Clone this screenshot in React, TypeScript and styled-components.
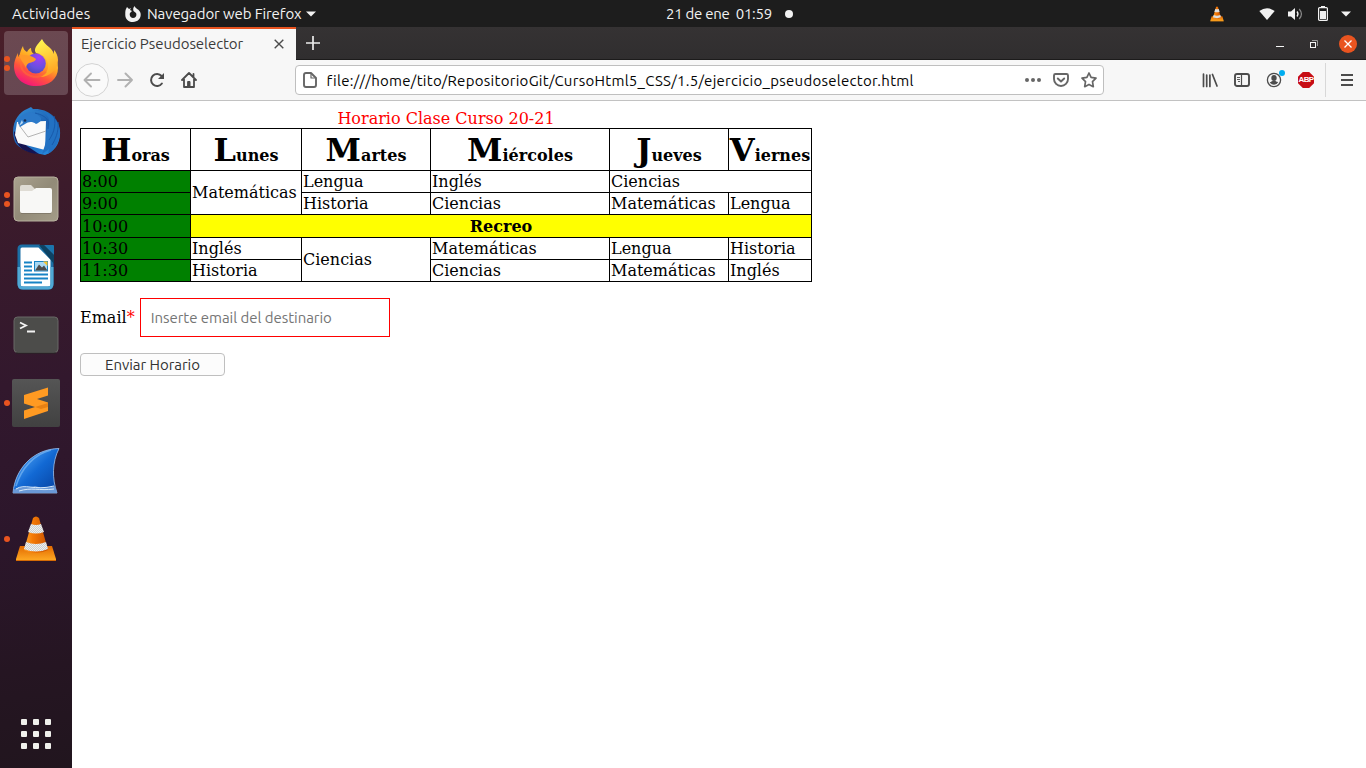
import React from "react";
import styled, { createGlobalStyle } from "styled-components";

const GlobalStyle = createGlobalStyle`
  *, *::before, *::after { box-sizing: border-box; }
  html, body, #root { margin: 0; height: 100%; }
  body { overflow: hidden; background: #fff; }
  svg { display: block; flex: none; }
`;

const uiFont = `Ubuntu, "Noto Sans", sans-serif`;

const Desktop = styled.div`
  width: 1366px;
  height: 768px;
  display: grid;
  grid-template: 27px 741px / 72px 1fr;
  font-family: ${uiFont};
  font-size: 15px;
`;

const TopBar = styled.header`
  grid-column: 1 / -1;
  display: grid;
  grid-template-columns: 666px 1fr auto;
  align-items: center;
  background: #1d1d1d;
  color: #f2f2f2;
`;

const TopGroup = styled.div`
  display: flex;
  align-items: center;
`;

const Label = styled.span<{ $w: number; $ls?: number }>`
  flex: none;
  width: ${(p) => p.$w}px;
  letter-spacing: ${(p) => p.$ls ?? 0}px;
  white-space: pre;
  line-height: 20px;
`;

const Spacer = styled.span<{ $w: number }>`
  flex: none;
  width: ${(p) => p.$w}px;
`;

const ClockDot = styled.span`
  width: 8px;
  height: 8px;
  margin-left: 13px;
  border-radius: 50%;
  background: #f2f2f2;
`;

const Dock = styled.nav`
  display: flex;
  flex-direction: column;
  gap: 4px;
  padding: 4px;
  background: linear-gradient(172deg, #4a1f29 0%, #3c1b2b 22%, #32182d 48%, #2c162b 68%, #251522 86%, #21151e 100%);
`;

const DockItem = styled.div<{ $active?: boolean; $last?: boolean }>`
  position: relative;
  flex: none;
  height: 64px;
  display: grid;
  place-items: center;
  border-radius: 4px;
  margin-top: ${(p) => (p.$last ? "auto" : 0)};
  margin-bottom: ${(p) => (p.$last ? "-2px" : 0)};
  background: ${(p) => (p.$active ? "rgba(255,255,255,.19)" : "transparent")};
`;

const Running = styled.div`
  position: absolute;
  left: 0;
  top: 0;
  bottom: 0;
  display: flex;
  flex-direction: column;
  justify-content: center;
  gap: 3px;
`;

const RunningDot = styled.i`
  width: 6px;
  height: 6px;
  border-radius: 50%;
  background: #e95420;
`;

const Browser = styled.main`
  display: flex;
  flex-direction: column;
  background: #fff;
`;

const TabStrip = styled.div`
  flex: none;
  height: 33px;
  display: flex;
  align-items: stretch;
  background: linear-gradient(#353233, #302e2f);
  border-bottom: 1px solid #1c1b1b;
`;

const Tab = styled.div`
  width: 224px;
  height: 33px;
  display: flex;
  align-items: center;
  padding: 0 0 1px 9px;
  border-top: 2px solid #e95420;
  background: #f7f7f7;
  color: #3b3b3b;
`;

const StripIcons = styled.div`
  flex: 1;
  display: flex;
  align-items: center;
  justify-content: space-between;
  padding: 0 9px 0 10px;
`;

const Controls = styled.div`
  display: flex;
  align-items: center;
  padding-top: 2px;
`;

const Toolbar = styled.div`
  flex: none;
  height: 41px;
  display: flex;
  align-items: center;
  background: #f7f7f7;
  border-bottom: 1px solid #c2c2c2;
  padding-left: 3px;
`;

const AddressBar = styled.div`
  width: 809px;
  height: 30px;
  margin-left: 98px;
  display: flex;
  align-items: center;
  padding: 0 6px;
  border: 1px solid #bfbfbf;
  border-radius: 4px;
  background: #fff;
  color: #050505;
`;

const AddressText = styled(Label)`
  padding-top: 2px;
`;

const AddressActions = styled.div`
  display: flex;
  align-items: center;
  gap: 12px;
  margin-left: auto;
`;

const ToolbarActions = styled.div`
  display: flex;
  align-items: center;
  margin-left: auto;
`;

const Divider = styled.span`
  width: 1px;
  height: 34px;
  background: #d8d8d8;
`;

const Page = styled.article`
  flex: 1;
  padding: 8px;
  font: 16px/19px "DejaVu Serif", serif;
  color: #000;
`;

const Caption = styled.div`
  width: 732px;
  height: 19px;
  color: #f00;
  text-align: center;
`;

const Schedule = styled.div`
  width: 732px;
  display: grid;
  grid-template-columns: 110px 111px 129px 179px 119px 83px;
  grid-template-rows: 42px 22px 22px 23px 22px 22px;
  border: solid #000;
  border-width: 0 1px 1px 0;
`;

const Cell = styled.div<{ $col?: number; $row?: number; $kind?: "hour" | "break" }>`
  grid-column: span ${(p) => p.$col ?? 1};
  grid-row: span ${(p) => p.$row ?? 1};
  display: flex;
  align-items: center;
  justify-content: ${(p) => (p.$kind === "break" ? "center" : "flex-start")};
  padding-left: ${(p) => (p.$kind === "break" ? 0 : 1)}px;
  border: solid #000;
  border-width: 1px 0 0 1px;
  background: ${(p) => (p.$kind === "hour" ? "#008000" : p.$kind === "break" ? "#ff0" : "#fff")};
  font-weight: ${(p) => (p.$kind === "break" ? 700 : 400)};
`;

const Heading = styled.div`
  padding-top: 1px;
  border: solid #000;
  border-width: 1px 0 0 1px;
  font-weight: 700;
  line-height: 40px;
  text-align: center;
  white-space: nowrap;
  &::first-letter { font-size: 32px; }
`;

const Field = styled.label`
  display: flex;
  align-items: center;
  height: 39px;
  margin-top: 16px;
`;

const Required = styled.span`
  color: #f00;
`;

const EmailInput = styled.input`
  width: 250px;
  height: 39px;
  margin: 0 0 0 5px;
  padding: 0 10px;
  border: 1px solid #f00;
  border-radius: 0;
  outline: 0;
  font: 15px ${uiFont};
  letter-spacing: -0.04px;
  &::placeholder { color: #757575; opacity: 1; }
`;

const SendButton = styled.button`
  display: block;
  width: 145px;
  height: 23px;
  margin-top: 16px;
  padding: 0;
  border: 1px solid #bfbfbf;
  border-radius: 4px;
  background: #fcfcfc;
  color: #333;
  font: 15px/20px ${uiFont};
  letter-spacing: -0.05px;
`;

const FirefoxIcon = () => (
  <svg width="48" height="48" viewBox="0 0 48 48">
    <defs>
      <linearGradient id="fxBody" x1=".8" y1=".1" x2=".3" y2="1">
        <stop offset="0" stopColor="#ffe340" />
        <stop offset=".38" stopColor="#ffa522" />
        <stop offset=".65" stopColor="#ff553c" />
        <stop offset="1" stopColor="#f3127e" />
      </linearGradient>
      <radialGradient id="fxGlobe" cx=".65" cy=".2" r=".9">
        <stop offset="0" stopColor="#a33ef5" />
        <stop offset=".6" stopColor="#6750df" />
        <stop offset="1" stopColor="#4b45b6" />
      </radialGradient>
      <linearGradient id="fxFlame" x1=".4" y1="0" x2=".7" y2="1">
        <stop offset="0" stopColor="#fff44f" />
        <stop offset="1" stopColor="#ff9d20" />
      </linearGradient>
    </defs>
    <path d="M11 7c0 3 2 5 4 6 1-2 3-4 4-4 0 3 1 5 3 6 5-1 9-1 13 2l5-2c4 4 6 9 6 14 0 11-9 18-22 18C11 47 2 39 2 27c0-5 2-9 4-13 0 2 0 3 1 4 1-4 2-8 4-11Z" fill="url(#fxBody)" />
    <path d="M30 0c-5 6-9 10-6 14 9 1 13 8 12 15-1 5-5 8-8 9 9 0 18-7 18-17 0-4-2-8-4-10v4c-2-7-9-8-12-15Z" fill="url(#fxFlame)" />
    <circle cx="23.800" cy="24.500" r="10" fill="url(#fxGlobe)" />
    <path d="M7 16c5 0 10 0 14 2l3 2c-1 3-4 3-7 4-2 1-3 3-3 5-2-5-5-7-7-13Z" fill="#ff9a29" />
    <path d="M9 23c-1 6 3 12 10 14 6 2 12 0 15-4" fill="none" stroke="#ff6d35" strokeWidth="2" opacity=".6" />
  </svg>
);

const ThunderbirdIcon = () => (
  <svg width="50" height="50" viewBox="0 0 50 50">
    <defs>
      <linearGradient id="tbBlue" x1=".2" y1="0" x2=".8" y2="1">
        <stop offset="0" stopColor="#3088d3" />
        <stop offset=".5" stopColor="#1c60b2" />
        <stop offset="1" stopColor="#268ce0" />
      </linearGradient>
    </defs>
    <path d="M4 36C-2 20 7 6 16 3l4-2 2 2c14-1 26 8 27 22 1 12-6 21-15 24l-5-1C17 46 8 43 4 36Z" fill="url(#tbBlue)" />
    <path d="M3 25c0 9 5 17 12 20 4 2 9 3 13 3l-12-8Z" fill="#151451" />
    <path d="m6 16 29-1-1 29-27-7-3-8Z" fill="#fafafa" />
    <path d="m8 19 9 12 18-6" fill="none" stroke="#aaa" strokeWidth=".9" />
    <path d="M7 17C10 5 22 4 28 10c4 3 2 6-3 8-4-3-8-2-11 0l-5 3Z" fill="#2b79c9" />
    <path d="M20 4c16 0 22 9 16 20-1 5 0 10-2 15l-3 9 7-5-1 5c8-5 12-14 12-23C47 10 33 2 20 4Z" fill="#2271c3" />
    <path d="M24 7c13 3 15 9 13 16m6-13c3 10-2 20-5 24m9-18c1 10-3 18-6 23" fill="none" stroke="#185aab" strokeWidth="1" />
    <path d="m11 14-3 6 4-3Z" fill="#b9d7ef" />
    <circle cx="14" cy="14.5" r="1.3" fill="#152d54" />
  </svg>
);

const FilesIcon = () => (
  <svg width="46" height="46" viewBox="0 0 46 46">
    <defs>
      <linearGradient id="filesBg" x1="0" y1="0" x2="1" y2="1">
        <stop offset="0" stopColor="#aaa28f" />
        <stop offset=".5" stopColor="#928b78" />
        <stop offset="1" stopColor="#a49c88" />
      </linearGradient>
    </defs>
    <rect x="1" y="1" width="44" height="44" rx="4" fill="url(#filesBg)" stroke="#b7b09e" />
    <path d="M7 11q0-2 2-2h9l4 4v7H7Z" fill="#dfdcd4" />
    <path d="M7 15h12l4-3h14q2 0 2 2v21q0 2-2 2H9q-2 0-2-2Z" fill="#f8f8f6" />
    <path d="M8 37.5h30" stroke="#7c7566" strokeWidth=".8" />
  </svg>
);

const WriterIcon = () => (
  <svg width="38" height="46" viewBox="0 0 38 46">
    <path d="M5 2h17l13 13v25q0 4-4 4H6q-4 0-4-4V5q0-3 3-3Z" fill="#fff" stroke="#1b6fa5" strokeWidth="3" />
    <path d="M2 23v17q0 4 4 4h25q4 0 4-4V23" fill="none" stroke="#50a8d4" strokeWidth="3" />
    <path d="M22 1h5l10 10v9Z" fill="#0d4263" />
    <path d="M27 1h9q1 0 1 1v9Z" fill="#1b75ad" />
    <path d="M7 18.5h8M7 22.5h8M7 26.5h8M7 30.5h24M7 34.5h24M7 38.5h18" stroke="#1783c5" strokeWidth="2" />
    <rect x="17.5" y="17.5" width="13" height="9.5" fill="#a9d8f2" stroke="#1783c5" />
    <path d="m18 26.5 4-6 3 3 2-2 3.5 5Z" fill="#4c4c4c" />
    <path d="M26 17.5h4.5V22Z" fill="#f9c62d" />
  </svg>
);

const TerminalIcon = () => (
  <svg width="46" height="38" viewBox="0 0 46 38">
    <rect x="1" y="1" width="44" height="35.5" rx="3.5" fill="#4c4c4a" stroke="#696966" />
    <path d="M3 37h40" stroke="#252523" />
    <path d="m7 6.5 6 3-6 3M14 15.5h8" fill="none" stroke="#f3f3f3" strokeWidth="1.8" />
  </svg>
);

const SublimeIcon = () => (
  <svg width="48" height="48" viewBox="0 0 48 48">
    <defs>
      <linearGradient id="sublimeBg" x2="0" y2="1">
        <stop stopColor="#555" />
        <stop offset="1" stopColor="#414141" />
      </linearGradient>
    </defs>
    <rect width="48" height="48" rx="2" fill="url(#sublimeBg)" />
    <path d="M36 8.500v8L25 20l11 3.500v8.500l-24 8v-8.500L23 28l-11-3.500V16Z" fill="#ff9a22" />
    <path d="m23 28 13-4v4l-7 2Z" fill="#e88113" />
  </svg>
);

const SharkFinIcon = () => (
  <svg width="48" height="48" viewBox="0 0 48 48">
    <defs>
      <linearGradient id="fin" x1="0" y1="0" x2="1" y2="1">
        <stop offset=".15" stopColor="#4ca0f2" />
        <stop offset=".5" stopColor="#1269d4" />
        <stop offset="1" stopColor="#063f9c" />
      </linearGradient>
    </defs>
    <path d="M1 46C3 22 21 2 47 1.500c-7 14-7 30-2 44.500Z" fill="url(#fin)" stroke="#9fc3ed" strokeWidth=".8" />
    <path d="M4 39C9 22 22 7 39 3" fill="none" stroke="#80bbf5" strokeWidth="1.5" opacity=".65" />
    <path d="M1 46v-3c8-5 15-1 22-4 7 2 13 2 20 0l2 7Z" fill="#6a99d7" />
    <path d="M4 42c9-6 18 2 38-3M7 44c13-4 20 0 35-2" fill="none" stroke="#d7e9fa" strokeWidth="1" />
  </svg>
);

const ConeIcon = ({ size }: { size: number }) => (
  <svg width={size} height={size} viewBox="0 0 48 48">
    <defs>
      <linearGradient id="coneOrange">
        <stop stopColor="#ffa733" />
        <stop offset=".35" stopColor="#f57b06" />
        <stop offset="1" stopColor="#c95100" />
      </linearGradient>
      <linearGradient id="coneBase" x2="0" y2="1">
        <stop stopColor="#e26900" />
        <stop offset="1" stopColor="#ffac25" />
      </linearGradient>
      <pattern id="coneWhite" width="2" height="2" patternUnits="userSpaceOnUse">
        <path d="M0 0h2v2H0Z" fill="#f0f0ee" />
        <path d="M0 0h1v1H0ZM1 1h1v1H1Z" fill="#cbcfd0" />
      </pattern>
    </defs>
    <path d="M8 31h32l4 13v2H4v-2Z" fill="url(#coneBase)" />
    <path d="M4 45.5h40" stroke="#d56b05" />
    <path d="M21 3q3-3 6 0l9 32q-12 6-24 0Z" fill="url(#coneOrange)" />
    <path d="m19 9-3 8q8 3 16 0l-3-8q-5 2-10 0ZM14 27l-2 7q12 5 24 0l-2-7q-10 4-20 0Z" fill="url(#coneWhite)" />
  </svg>
);

const AppsIcon = () => (
  <svg width="30" height="30" viewBox="0 0 30 30" fill="#f0f0ec">
    {[0, 12, 24].map((y) => [0, 12, 24].map((x) => <rect key={`${x}-${y}`} x={x} y={y} width="6" height="6" rx="1" />))}
  </svg>
);

const FirefoxGlyph = () => (
  <svg width="16" height="16" viewBox="0 0 16 16">
    <path d="M1 3 2 1l2 2 2-1-1 2 2 1-2 2c-1 3 1 5 3 5 3 0 4-3 3-5L8.5 5C8 3 8 2 9.500 0c1 3 5 3 6 7 1 5-2 9-7.500 9S0 12 .3 8C.2 6 .5 4 1 3Z" fill="#f2f2f2" />
  </svg>
);

const CaretIcon = () => (
  <svg width="10" height="6" viewBox="0 0 10 6"><path d="M0 .5h10L5 5.500Z" fill="#f2f2f2" /></svg>
);

const WifiIcon = () => (
  <svg width="16" height="12" viewBox="0 0 16 12"><path d="M.3 3Q8-2.500 15.700 3L8 12Z" fill="#f2f2f2" /></svg>
);

const VolumeIcon = () => (
  <svg width="15" height="14" viewBox="0 0 15 14">
    <path d="M0 4.500h3L7 1v12L3 9.500H0Z" fill="#f2f2f2" />
    <path d="M9 4.500q2 2.500 0 5" fill="none" stroke="#f2f2f2" strokeWidth="1.300" />
    <path d="M11.200 2q4.500 5 0 10" fill="none" stroke="#888" strokeWidth="1.200" />
  </svg>
);

const BatteryIcon = () => (
  <svg width="10" height="15" viewBox="0 0 10 15">
    <path d="M3 0h4v2H3Z" fill="#f2f2f2" />
    <rect x=".6" y="1.600" width="8.800" height="12.800" rx="1" fill="none" stroke="#f2f2f2" strokeWidth="1.200" />
    <path d="M2 5h6v8H2Z" fill="#f2f2f2" />
  </svg>
);

const CloseTabIcon = () => (
  <svg width="10" height="10" viewBox="0 0 10 10"><path d="m.7.7 8.600 8.600M9.300.7.7 9.300" stroke="#4c4c4c" strokeWidth="1.400" /></svg>
);

const PlusIcon = () => (
  <svg width="14" height="14" viewBox="0 0 14 14"><path d="M7 0v14M0 7h14" stroke="#ececec" strokeWidth="1.700" /></svg>
);

const MinimizeIcon = () => (
  <svg width="8" height="10" viewBox="0 0 8 10"><path d="M0 7.500h8" stroke="#f4f4f4" /></svg>
);

const RestoreIcon = () => (
  <svg width="8" height="8" viewBox="0 0 8 8" fill="none">
    <path d="M2 .5h5.500V6" stroke="#999" />
    <rect x=".5" y="2.500" width="5" height="5" stroke="#f4f4f4" />
  </svg>
);

const CloseWindowIcon = () => (
  <svg width="18" height="18" viewBox="0 0 18 18">
    <circle cx="9" cy="9" r="9" fill="#e95420" />
    <path d="m5.500 5.500 7 7M12.500 5.500l-7 7" stroke="#fff" strokeWidth="1.300" />
  </svg>
);

const BackIcon = () => (
  <svg width="34" height="34" viewBox="0 0 34 34" fill="none">
    <circle cx="17" cy="17" r="16.400" fill="#fafafa" stroke="#d2d2d2" />
    <path d="M24.500 17H10M16 10.500 9.500 17l6.500 6.500" stroke="#b1b1b1" strokeWidth="1.900" strokeLinecap="round" strokeLinejoin="round" />
  </svg>
);

const ForwardIcon = () => (
  <svg width="16" height="16" viewBox="0 0 16 16" fill="none">
    <path d="M1 8h14M8.500 1.500 15 8l-6.500 6.500" stroke="#b1b1b1" strokeWidth="1.900" strokeLinecap="round" strokeLinejoin="round" />
  </svg>
);

const ReloadIcon = () => (
  <svg width="16" height="16" viewBox="0 0 16 16" fill="none">
    <path d="M12.900 11.500A6 6 0 1 1 12.600 4" stroke="#4c4c4c" strokeWidth="2" strokeLinecap="round" />
    <path d="M15 1v6H9Z" fill="#4c4c4c" />
  </svg>
);

const HomeIcon = () => (
  <svg width="16" height="16" viewBox="0 0 16 16" fill="none" stroke="#4c4c4c" strokeLinejoin="round" strokeLinecap="round">
    <path d="m1 8 7-7 7 7M3 7v8h10V7M12.500 2v3" strokeWidth="1.800" />
    <path d="M7 9.500h2V14H7Z" fill="#4c4c4c" strokeWidth="1" />
  </svg>
);

const DocumentIcon = () => (
  <svg width="16" height="16" viewBox="0 0 16 16" fill="none" stroke="#666" strokeLinejoin="round">
    <path d="M4 1h5l5 5v7q0 2-2 2H4q-2 0-2-2V3q0-2 2-2Z" strokeWidth="1.900" />
    <path d="M9 1v5h5" strokeWidth="1.200" />
  </svg>
);

const DotsIcon = () => (
  <svg width="16" height="16" viewBox="0 0 16 16" fill="#666"><circle cx="2" cy="8" r="2" /><circle cx="8" cy="8" r="2" /><circle cx="14" cy="8" r="2" /></svg>
);

const PocketIcon = () => (
  <svg width="16" height="16" viewBox="0 0 16 16" fill="none" stroke="#666" strokeWidth="1.900" strokeLinejoin="round" strokeLinecap="round">
    <path d="M2.500 2h11Q15 2 15 3.500V7A7 7 0 0 1 1 7V3.500Q1 2 2.500 2Z" />
    <path d="m4.800 6.500 3.200 3 3.200-3" />
  </svg>
);

const StarIcon = () => (
  <svg width="16" height="16" viewBox="0 0 16 16" fill="none" stroke="#666" strokeWidth="1.700" strokeLinejoin="round">
    <path d="m8 1 2.100 4.400 4.900.7-3.500 3.500.8 5.100L8 12.400l-4.300 2.300.8-5.100L1 6.100l4.900-.7Z" />
  </svg>
);

const LibraryIcon = () => (
  <svg width="16" height="16" viewBox="0 0 16 16" fill="none" stroke="#4c4c4c" strokeWidth="1.700" strokeLinecap="round">
    <path d="M1.500 2v12.500M4.700 3v11.500M7.900 3v11.500M10.500 2.500l4.500 11.500" />
  </svg>
);

const SidebarIcon = () => (
  <svg width="16" height="16" viewBox="0 0 16 16" fill="none" stroke="#4c4c4c">
    <rect x="1" y="2" width="14" height="12" rx="2" strokeWidth="1.900" />
    <path d="M7.500 2v12" strokeWidth="1.200" />
    <path d="M3 5.500h3M3 7.500h3M4 9.500h2" strokeWidth=".9" />
  </svg>
);

const AccountIcon = () => (
  <svg width="19" height="20" viewBox="0 0 19 20">
    <circle cx="8" cy="10" r="6.600" fill="none" stroke="#4c4c4c" strokeWidth="1.300" />
    <ellipse cx="8" cy="8" rx="2.700" ry="3" fill="#4c4c4c" />
    <path d="M3.700 12q2-.2 2.800-1h3q1 .8 2.800 1-1.500 2.800-4.300 2.800T3.700 12Z" fill="#4c4c4c" />
    <circle cx="16" cy="3" r="3" fill="#00adf0" />
  </svg>
);

const BlockerBadge = styled.span`
  width: 16px;
  height: 16px;
  clip-path: polygon(30% 0, 70% 0, 100% 30%, 100% 70%, 70% 100%, 30% 100%, 0 70%, 0 30%);
  background: #c70d15;
  color: #fff;
  font: 700 8px/16px "Liberation Sans Narrow", "Liberation Sans", sans-serif;
  letter-spacing: -0.7px;
  display: flex;
  justify-content: center;
`;

const MenuIcon = () => (
  <svg width="12" height="14" viewBox="0 0 12 14"><path d="M0 2h12M0 7h12M0 12h12" stroke="#4c4c4c" strokeWidth="1.800" /></svg>
);

const dockApps: { icon: React.ReactNode; dots: number; active?: boolean }[] = [
  { icon: <FirefoxIcon />, dots: 2, active: true },
  { icon: <ThunderbirdIcon />, dots: 0 },
  { icon: <FilesIcon />, dots: 2 },
  { icon: <WriterIcon />, dots: 0 },
  { icon: <TerminalIcon />, dots: 0 },
  { icon: <SublimeIcon />, dots: 1 },
  { icon: <SharkFinIcon />, dots: 0 },
  { icon: <ConeIcon size={48} />, dots: 1 },
];

const days = ["Horas", "Lunes", "Martes", "Miércoles", "Jueves", "Viernes"];

type CellData = { text: string; col?: number; row?: number; kind?: "hour" | "break" };

const cells: CellData[] = [
  { text: "8:00", kind: "hour" },
  { text: "Matemáticas", row: 2 },
  { text: "Lengua" },
  { text: "Inglés" },
  { text: "Ciencias", col: 2 },
  { text: "9:00", kind: "hour" },
  { text: "Historia" },
  { text: "Ciencias" },
  { text: "Matemáticas" },
  { text: "Lengua" },
  { text: "10:00", kind: "hour" },
  { text: "Recreo", col: 5, kind: "break" },
  { text: "10:30", kind: "hour" },
  { text: "Inglés" },
  { text: "Ciencias", row: 2 },
  { text: "Matemáticas" },
  { text: "Lengua" },
  { text: "Historia" },
  { text: "11:30", kind: "hour" },
  { text: "Historia" },
  { text: "Ciencias" },
  { text: "Matemáticas" },
  { text: "Inglés" },
];

export default function App() {
  return (
    <Desktop>
      <GlobalStyle />
      <TopBar>
        <TopGroup>
          <Spacer $w={12} />
          <Label $w={113} $ls={0.1}>Actividades</Label>
          <FirefoxGlyph />
          <Spacer $w={6} />
          <Label $w={159} $ls={-0.1}>Navegador web Firefox</Label>
          <CaretIcon />
        </TopGroup>
        <TopGroup>
          <Label $w={106} $ls={-0.28}>21 de ene  01:59</Label>
          <ClockDot />
        </TopGroup>
        <TopGroup>
          <ConeIcon size={16} />
          <Spacer $w={34} />
          <WifiIcon />
          <Spacer $w={13} />
          <VolumeIcon />
          <Spacer $w={15} />
          <BatteryIcon />
          <Spacer $w={13} />
          <CaretIcon />
          <Spacer $w={15} />
        </TopGroup>
      </TopBar>
      <Dock>
        {dockApps.map((app, i) => (
          <DockItem key={i} $active={app.active}>
            <Running>
              {Array.from({ length: app.dots }, (_, n) => <RunningDot key={n} />)}
            </Running>
            {app.icon}
          </DockItem>
        ))}
        <DockItem $last><AppsIcon /></DockItem>
      </Dock>
      <Browser>
        <TabStrip>
          <Tab>
            <Label $w={193} $ls={-0.06}>Ejercicio Pseudoselector</Label>
            <CloseTabIcon />
          </Tab>
          <StripIcons>
            <PlusIcon />
            <Controls>
              <MinimizeIcon />
              <Spacer $w={26} />
              <RestoreIcon />
              <Spacer $w={21} />
              <CloseWindowIcon />
            </Controls>
          </StripIcons>
        </TabStrip>
        <Toolbar>
          <BackIcon />
          <Spacer $w={8} />
          <ForwardIcon />
          <Spacer $w={16} />
          <ReloadIcon />
          <Spacer $w={16} />
          <HomeIcon />
          <AddressBar>
            <DocumentIcon />
            <Spacer $w={8.5} />
            <AddressText $w={620} $ls={0.28}>file:///home/tito/RepositorioGit/CursoHtml5_CSS/1.5/ejercicio_pseudoselector.html</AddressText>
            <AddressActions>
              <DotsIcon />
              <PocketIcon />
              <StarIcon />
            </AddressActions>
          </AddressBar>
          <ToolbarActions>
            <LibraryIcon />
            <Spacer $w={16} />
            <SidebarIcon />
            <Spacer $w={16} />
            <AccountIcon />
            <Spacer $w={13} />
            <BlockerBadge>ABP</BlockerBadge>
            <Spacer $w={11} />
            <Divider />
            <Spacer $w={15} />
            <MenuIcon />
            <Spacer $w={13} />
          </ToolbarActions>
        </Toolbar>
        <Page>
          <Caption>Horario Clase Curso 20-21</Caption>
          <Schedule>
            {days.map((day) => <Heading key={day}>{day}</Heading>)}
            {cells.map((cell, i) => (
              <Cell key={i} $col={cell.col} $row={cell.row} $kind={cell.kind}>{cell.text}</Cell>
            ))}
          </Schedule>
          <Field>
            Email<Required>*</Required>
            <EmailInput type="email" placeholder="Inserte email del destinario" />
          </Field>
          <SendButton type="button">Enviar Horario</SendButton>
        </Page>
      </Browser>
    </Desktop>
  );
}
